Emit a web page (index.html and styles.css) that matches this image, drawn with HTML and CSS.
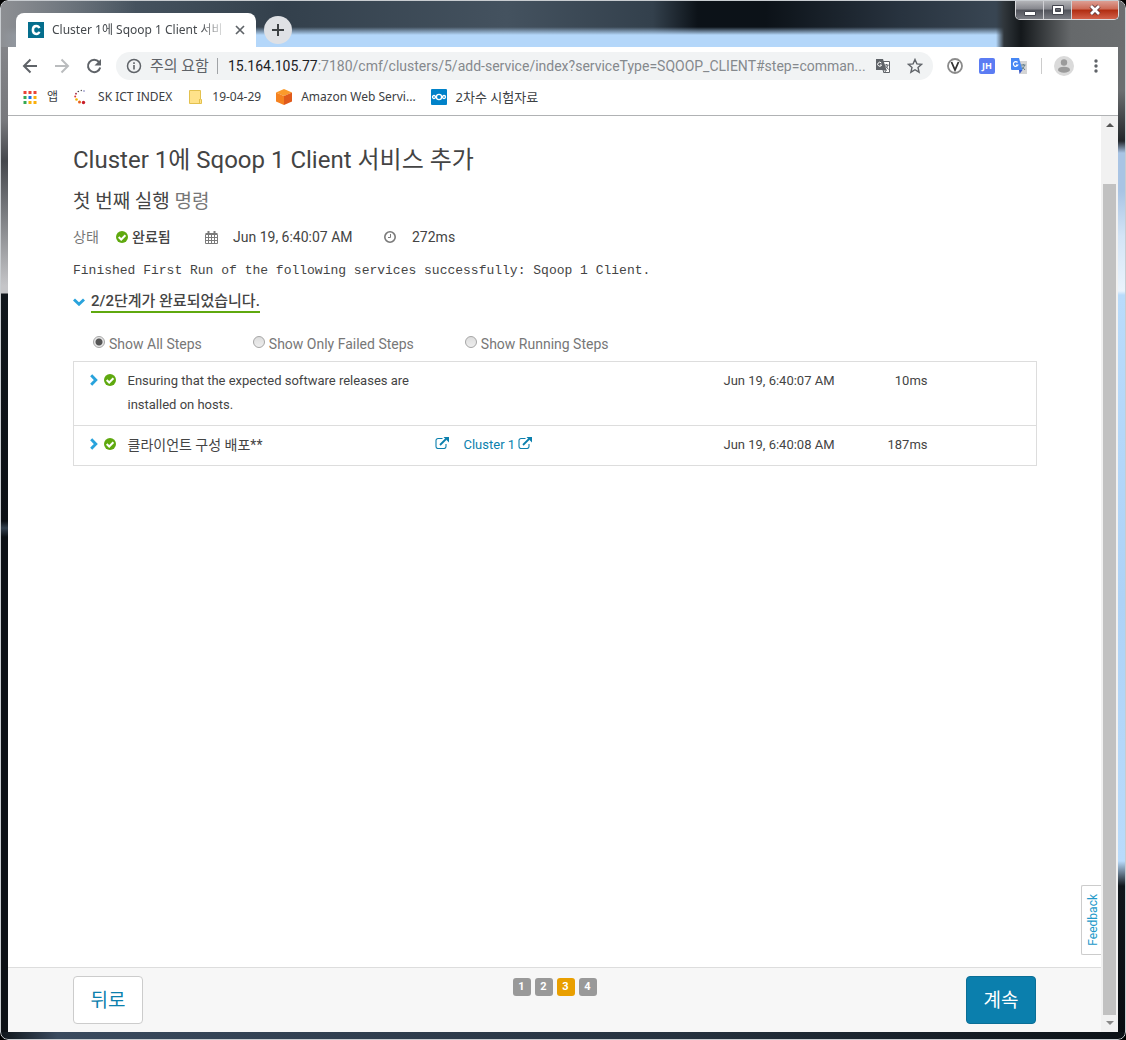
FILE: index.html
```html
<!DOCTYPE html>
<html lang="ko">
<head>
<meta charset="utf-8">
<title>Cluster 1에 Sqoop 1 Client 서비스 추가</title>
<link rel="stylesheet" href="styles.css">
</head>
<body>
<svg class="sprite" aria-hidden="true">
  <symbol id="check" viewBox="0 0 12 12"><circle cx="6" cy="6" r="6" fill="#5fa90f"/><path d="M2.7 6l2.5 2.5 4.2-4.3" fill="none" stroke="#fff" stroke-width="2"/></symbol>
  <symbol id="chevron" viewBox="0 0 8 12"><path d="M1.2 1.2L5.8 6l-4.6 4.8" fill="none" stroke="#29a3dc" stroke-width="2.9"/></symbol>
  <symbol id="external" viewBox="0 0 14 12"><path d="M7.500 1.500H3a2 2 0 0 0-2 2v6a2 2 0 0 0 2 2h6a2 2 0 0 0 2-2V7" fill="none" stroke="#0b7fad" stroke-width="1.100"/><path d="M5 8l6-6" stroke="#0b7fad" stroke-width="1.800"/><path d="M8.500 0H14v5.500z" fill="#0b7fad"/></symbol>
</svg>
<div class="window">
  <header class="titlebar">
    <div class="tab">
      <svg class="i16" viewBox="0 0 16 16"><path fill="#056e8d" d="M0 0h16v16H0z"/><path d="M11.300 6.200C10.800 4.700 9.700 4.100 8.300 4.100 6.200 4.100 4.900 5.700 4.900 8s1.300 3.900 3.400 3.900c1.500 0 2.600-.7 3-2.200" fill="none" stroke="#fff" stroke-width="2.500"/></svg>
      <span class="tab-title">Cluster 1에 Sqoop 1 Client 서비</span>
      <button class="bare" aria-label="탭 닫기"><svg width="10" height="10" viewBox="0 0 10 10"><path d="M1 1l8 8M9 1l-8 8" stroke="#5f6368" stroke-width="1.700"/></svg></button>
    </div>
    <button class="new-tab" aria-label="새 탭"><svg width="12" height="12" viewBox="0 0 12 12"><path d="M6 0v12M0 6h12" stroke="#3c4043" stroke-width="2"/></svg></button>
    <div class="controls">
      <button class="ctl" aria-label="최소화"><svg width="14" height="12" viewBox="0 0 14 12"><path d="M1.500 7.500h11v4h-11z" fill="#fff" stroke="#44464f"/></svg></button>
      <button class="ctl" aria-label="최대화"><svg width="14" height="12" viewBox="0 0 14 12"><path fill-rule="evenodd" d="M1.500 1.500h11v9h-11zM4.500 4.500h5v3h-5z" fill="#fff" stroke="#44464f"/></svg></button>
      <button class="ctl close" aria-label="닫기"><svg width="14" height="12" viewBox="0 0 14 12"><path d="M3 2l8 8M11 2l-8 8" stroke="#5c3a3c" stroke-width="4.500"/><path d="M3 2l8 8M11 2l-8 8" stroke="#fff" stroke-width="2.700"/></svg></button>
    </div>
  </header>
  <div class="toolbar">
    <button class="bare nav" aria-label="뒤로"><svg class="i16" viewBox="0 0 16 16"><path d="M15 8H2M8.500 1.500L2 8l6.500 6.500" fill="none" stroke="#5f6368" stroke-width="2"/></svg></button>
    <button class="bare nav" aria-label="앞으로"><svg class="i16" viewBox="0 0 16 16"><path d="M1 8h13M7.500 1.500L14 8l-6.500 6.500" fill="none" stroke="#babcbe" stroke-width="2"/></svg></button>
    <button class="bare nav" aria-label="새로고침"><svg class="i16" viewBox="0 0 16 16"><path d="M13 4A6.200 6.200 0 1 0 14.200 9.500" fill="none" stroke="#5f6368" stroke-width="2"/><path d="M15 1v6.500H8.500z" fill="#5f6368"/></svg></button>
    <div class="omnibox">
      <svg class="i16" viewBox="0 0 16 16"><circle cx="8" cy="8" r="6.500" fill="none" stroke="#5f6368" stroke-width="1.500"/><path d="M7.200 7h1.600v4.500H7.200zM7.200 4.300h1.600v1.600H7.200z" fill="#5f6368"/></svg>
      <span class="warn">주의 요함</span>
      <span class="url"><b>15.164.105.77</b>:7180/cmf/clusters/5/add-service/index?serviceType=SQOOP_CLIENT#step=comman...</span>
      <button class="bare" aria-label="번역"><svg class="i16" viewBox="0 0 16 16"><path d="M7 3.500h7.500v11H9" fill="#fff" stroke="#5f6368"/><path d="M1 1h7l3.500 11H1z" fill="#5f6368"/><path d="M6.300 5A2 2 0 1 0 6.600 7H5" fill="none" stroke="#fff"/><path d="M9.500 7h4M11.500 6v1M13 7c-.5 2-1.500 3-3 4M10.500 8l3 3.500M9 15l-1-3h3.500z" fill="none" stroke="#5f6368"/></svg></button>
      <button class="bare" aria-label="북마크"><svg class="i16" viewBox="0 0 16 16"><path d="M8 1.500l1.900 4.400 4.700.4-3.600 3.200 1.100 4.700L8 11.700l-4.100 2.500L5 9.500 1.400 6.300l4.700-.4z" fill="none" stroke="#5f6368" stroke-width="1.400"/></svg></button>
    </div>
    <div class="extensions">
      <svg class="i16" viewBox="0 0 16 16"><circle cx="8" cy="8" r="7" fill="#fff" stroke="#8b8b8b" stroke-width="1.800"/><path d="M4.500 4L8 12l3.500-8" fill="none" stroke="#333" stroke-width="1.800"/></svg>
      <span class="jh">JH</span>
      <svg class="i16" viewBox="0 0 16 16"><path d="M6 3h10v13H9z" fill="#d5d5d5"/><path d="M0 0h8l3.500 12H1a1 1 0 0 1-1-1z" fill="#4687f4"/><path d="M8 12h3.500L8.500 16z" fill="#3355c8"/><path d="M6.500 4.500A2.300 2.300 0 1 0 6.800 7H5" fill="none" stroke="#fff" stroke-width="1.200"/><path d="M10 7h4.500M12.300 6v1M13.500 7c-.5 2-1 3-2.500 4M11 8.500l3 3.500" fill="none" stroke="#607d8b"/></svg>
    </div>
    <svg class="avatar" viewBox="0 0 20 20"><circle cx="10" cy="10" r="10" fill="#dadada"/><circle cx="10" cy="6.500" r="3.200" fill="#9b9b9b"/><ellipse cx="10" cy="13.700" rx="6" ry="3" fill="#9b9b9b"/></svg>
    <button class="bare" aria-label="메뉴"><svg class="i16" viewBox="0 0 16 16" fill="#5f6368"><circle cx="8" cy="3" r="1.700"/><circle cx="8" cy="8" r="1.700"/><circle cx="8" cy="13" r="1.700"/></svg></button>
  </div>
  <nav class="bookmarks">
    <a href="#"><svg class="i16" viewBox="0 0 16 16"><path d="M1.500 2h3v3h-3zM6.500 2h3v3h-3zM11.500 2h3v3h-3z" fill="#ea4335"/><path d="M1.500 7h3v3h-3z" fill="#34a853"/><path d="M6.500 7h3v3h-3z" fill="#1a73e8"/><path d="M11.500 7h3v3h-3zM11.500 12h3v3h-3zM6.500 12h3v3h-3z" fill="#fbb00b"/><path d="M1.500 12h3v3h-3z" fill="#34a853"/></svg>앱</a>
    <a href="#"><svg class="i16" viewBox="0 0 16 16"><circle cx="10.500" cy="13.500" r="1.700" fill="#c81e2a"/><circle cx="6.500" cy="13" r="1.500" fill="#e8631a"/><circle cx="3.500" cy="10.500" r="1.300" fill="#f0b400"/><circle cx="2.200" cy="7.500" r="1" fill="#e0392b"/><circle cx="3" cy="4.700" r=".9" fill="#a02040"/><circle cx="5.300" cy="2.500" r=".8" fill="#444"/><circle cx="8.300" cy="1.500" r=".7" fill="#555"/><circle cx="11" cy="2" r=".7" fill="#55a"/></svg>SK ICT INDEX</a>
    <a href="#"><svg class="i16" viewBox="0 0 16 16"><path d="M2.500 1.500h11v9h1v4h-12z" fill="#ffe28a" stroke="#e3c14e"/><path d="M12.500 10v4" stroke="#e3c14e"/></svg>19-04-29</a>
    <a href="#"><svg class="i16" viewBox="0 0 16 16"><path d="M8 0l8 3.500L8 7 0 3.500z" fill="#fb9a2b"/><path d="M0 3.500L8 7v9l-8-3.500z" fill="#f58220"/><path d="M16 3.500L8 7v9l8-3.500z" fill="#e05a1b"/></svg>Amazon Web Servi...</a>
    <a href="#" class="ko"><svg class="i16" viewBox="0 0 16 16"><rect width="16" height="16" rx="1" fill="#0082c9"/><g fill="none" stroke="#fff" stroke-width="1.300"><circle cx="8" cy="8" r="2.600"/><circle cx="3" cy="8" r="1.500"/><circle cx="13" cy="8" r="1.500"/></g></svg>2차수 시험자료</a>
  </nav>
  <div class="viewport">
    <div class="page">
      <main>
        <h1>Cluster 1에 Sqoop 1 Client 서비스 추가</h1>
        <h2>첫 번째 실행 <small>명령</small></h2>
        <div class="status">
          <span class="muted">상태</span>
          <strong><svg class="i12"><use href="#check"/></svg>완료됨</strong>
          <svg class="cal" viewBox="0 0 13 13"><path d="M.5 3.500h12v9H.5zM.5 6.500h12M.5 9.500h12M3.500 4v8.500M6.500 4v8.500M9.500 4v8.500M.5 2.500h12" fill="none" stroke="#7a7a7a"/><path d="M3.500 0v3M9.500 0v3" stroke="#7a7a7a" stroke-width="2"/></svg>
          <span class="when">Jun 19, 6:40:07 AM</span>
          <svg class="i12" viewBox="0 0 12 12"><circle cx="6" cy="6" r="5.200" fill="none" stroke="#7a7a7a" stroke-width="1.600"/><path d="M6.500 3v3.500H4" fill="none" stroke="#7a7a7a"/></svg>
          <span class="took">272ms</span>
        </div>
        <p class="message">Finished First Run of the following services successfully: Sqoop 1 Client.</p>
        <button class="bare summary"><svg class="down" viewBox="0 0 12 8"><path d="M1 1.500l5 4.700 5-4.700" fill="none" stroke="#29a3dc" stroke-width="2.900"/></svg><span>2/2단계가 완료되었습니다.</span></button>
        <div class="filters">
          <label><input type="radio" name="f" checked>Show All Steps</label>
          <label><input type="radio" name="f">Show Only Failed Steps</label>
          <label><input type="radio" name="f">Show Running Steps</label>
        </div>
        <table class="steps">
          <tr>
            <td class="c-icon"><svg class="chev"><use href="#chevron"/></svg><svg class="i12"><use href="#check"/></svg></td>
            <td class="c-name">Ensuring that the expected software releases are installed on hosts.</td>
            <td class="c-ext"></td><td class="c-ctx"></td>
            <td class="c-time">Jun 19, 6:40:07 AM</td><td class="c-dur">10ms</td><td class="c-end"></td>
          </tr>
          <tr>
            <td class="c-icon"><svg class="chev"><use href="#chevron"/></svg><svg class="i12"><use href="#check"/></svg></td>
            <td class="c-name ko">클라이언트 구성 배포**</td>
            <td class="c-ext"><a href="#" aria-label="열기"><svg class="ext"><use href="#external"/></svg></a></td>
            <td class="c-ctx"><a href="#">Cluster 1 <svg class="ext"><use href="#external"/></svg></a></td>
            <td class="c-time">Jun 19, 6:40:08 AM</td><td class="c-dur">187ms</td><td class="c-end"></td>
          </tr>
        </table>
      </main>
      <button class="feedback">Feedback</button>
      <footer>
        <button class="btn">뒤로</button>
        <ol class="pager"><li>1</li><li>2</li><li class="on">3</li><li>4</li></ol>
        <button class="btn primary">계속</button>
      </footer>
    </div>
    <div class="scrollbar"><i class="up"></i><span class="thumb"></span><i class="dn"></i></div>
  </div>
</div>
</body>
</html>
```
FILE: styles.css
```css
* { box-sizing: border-box; }
html { height: 100%; background: #000; }
body { margin: 0; height: 100%; font: 13px/24px Roboto, "Noto Sans CJK KR", sans-serif; color: #444; }
button { font: inherit; cursor: pointer; }
svg { display: block; flex: none; }
a { color: #0b7fad; text-decoration: none; }
.sprite { position: absolute; width: 0; height: 0; }
.bare { padding: 0; border: 0; background: none; color: inherit; }
.i16 { width: 16px; height: 16px; }
.i12 { width: 12px; height: 12px; }

/* window frame */
.window {
  display: flex; flex-direction: column; min-height: 100%; padding: 0 7px 7px;
  border: 1px solid #c8ccd0; border-radius: 8px; outline: 1px solid #000;
  background:
    linear-gradient(90deg, #10161b, #3a4a5e 5%, #26323f 60%, #0c1116) bottom / 100% 7px no-repeat,
    linear-gradient(#8b8c90, #77787c 120px, #45474c 160px, #77797d 210px, #c5c5c8 285px, #c5c5c8 292px, #11171c 293px, #0c1015 520px, #33404e 527px, #0c1015 536px, #0c1015 100%) left / 7px 100% no-repeat,
    linear-gradient(#6b6e70, #6b6e70 90px, #22262a 140px, #a9c4e4 152px, #a9c4e4 190px, #d3e4f6 235px, #eaf3fc 290px, #b9dbfb 294px, #aed2f6 600px, #b9dbfb 860px, #10161b 885px, #080c10 100%) right / 7px 100% no-repeat,
    #15191d;
}
.titlebar {
  display: flex; height: 46px; margin: 0 -7px; padding: 12px 0 0 15px; border-radius: 7px 7px 0 0;
  background:
    linear-gradient(90deg, #8d8f93, #8d8f9300 12%) no-repeat,
    linear-gradient(90deg, transparent 995px, #30363b 1003px, #14181b 1020px, #66696b 1070px, #6b6e70),
    linear-gradient(transparent 26px, #b4d7fa 34px),
    linear-gradient(90deg, #56636f, #33404c 25%, #44525f 45%, #33404c 58%, #0c1218 62%, #0c1218 68%, #28333f 80%, #384552 88%);
}
.tab {
  display: flex; align-items: center; width: 240px; padding: 0 11px 0 12px; border-radius: 8px 8px 0 0; background: #fff;
  font: 12px/16px "Noto Sans", "Noto Sans CJK KR", sans-serif; color: #45494d;
}
.tab-title {
  flex: 1; margin: 0 8px; white-space: nowrap;
  mask-image: linear-gradient(90deg, #000 85%, transparent);
}
.new-tab {
  display: grid; place-items: center; width: 28px; height: 28px; margin: 3px 0 0 8px; padding: 0;
  border: 0; border-radius: 50%; background: #dfe1e5;
}
.controls { display: flex; height: 19px; margin: -12px 6px 0 auto; border: 1px solid #d9dadd; border-top: 0; border-radius: 0 0 5px 5px; overflow: hidden; }
.ctl { display: grid; place-items: center; width: 28px; padding: 0; border: 0; border-right: 1px solid #d0d0d4; background: linear-gradient(#b3b4b8, #85868c 45%, #50525a 50%, #7b7d84); }
.ctl.close { width: 46px; border: 0; background: linear-gradient(#dd9e93, #cc6955 45%, #b02c10 50%, #d2614a); }

/* address row */
.toolbar { display: flex; align-items: center; height: 38px; padding: 0 14px; background: #fff; }
.nav { margin-right: 16px; }
.omnibox {
  display: flex; align-items: center; flex: 1; min-width: 0; height: 28px; margin-left: -2px; padding: 0 10px; border-radius: 14px; background: #f1f3f4;
  font: 14px/20px Roboto, "Noto Sans CJK KR", sans-serif; color: #85898d;
}
.warn { margin: 0 10px 0 8px; padding-right: 8px; border-right: 1px solid #a0a3a6; font-size: 15px; line-height: 16px; color: #5f6368; white-space: nowrap; }
.url { flex: 1; min-width: 0; white-space: nowrap; }
.url b { font-weight: 400; color: #202124; }
.omnibox .bare + .bare { margin-left: 16px; }
.extensions { display: flex; gap: 16px; margin: 0 12px 0 14px; padding-right: 14px; border-right: 1px solid #ccc; }
.jh { width: 16px; height: 16px; border-radius: 2px; background: #5b7cf3; color: #fff; font: bold 9px/16px "Open Sans", sans-serif; text-align: center; }
.avatar { width: 20px; height: 20px; margin-right: 14px; }

.bookmarks { display: flex; align-items: center; gap: 15px; height: 31px; padding: 0 14px 6px; border-bottom: 1px solid #b0b2b4; background: #fff; font: 12px/16px "Noto Sans", "Noto Sans CJK KR", sans-serif; }
.bookmarks a { display: flex; gap: 9px; color: #3c4043; white-space: nowrap; }
.bookmarks .ko { font-size: 13px; }

/* wizard page */
.viewport { display: flex; flex: 1; background: #fff; }
.page { position: relative; display: flex; flex-direction: column; flex: 1; }
main { flex: 1; padding: 26px 64px 24px 65px; }
h1 { margin: 0; font-size: 24px; line-height: 36px; font-weight: 400; }
h2 { margin: 10px 0 0; font-size: 19px; line-height: 28px; font-weight: 400; }
h2 small { font-size: 19px; color: #777; }
.status { display: flex; align-items: center; margin-top: 9px; font-size: 14px; }
.muted { width: 43px; color: #777; }
.status strong { display: flex; align-items: center; gap: 4px; width: 89px; font-weight: 500; }
.cal { width: 13px; height: 13px; margin-right: 15px; }
.when { width: 151px; }
.took { margin-left: 16px; }
.message { margin: 10px 0 8px; font: 13px/24px "Liberation Mono", monospace; }
.summary { display: flex; align-items: center; gap: 6px; font-size: 15px; font-weight: 500; line-height: 20px; }
.summary span { border-bottom: 2px solid #5fa90f; }
.down { width: 12px; height: 8px; }
.filters { display: flex; margin-top: 19px; padding-left: 20px; font-size: 14px; color: #777; }
.filters label { display: flex; align-items: center; margin-right: 51px; }
.filters input {
  appearance: none; width: 12px; height: 12px; margin: 0 4px 4px 0; border: 1px solid #a5a5a5; border-radius: 50%;
  background: linear-gradient(#ddd, #eee);
}
.filters input:checked { background: radial-gradient(#555 3px, #e6e6e6 4px); }
.steps { width: 100%; margin-top: 5px; border: 1px solid #ddd; border-collapse: collapse; table-layout: fixed; }
.steps tr { border-top: 1px solid #ddd; }
.steps td { padding: 7px 0 8px; vertical-align: top; }
.steps .c-icon { width: 54px; padding: 12px 0 0 16px; }
.c-icon svg { display: inline-block; vertical-align: top; }
.chev { width: 8px; height: 12px; margin-right: 6px; }
.c-name { width: 307px; }
.c-name.ko { font-size: 14px; }
.steps tr:first-child .c-name { padding-right: 10px; }
.c-ext { width: 29px; }
.ext { display: inline-block; width: 14px; height: 12px; }
.c-time { width: 126px; }
.c-dur { width: 78px; text-align: right; }
.c-end { width: 109px; }
.feedback {
  position: absolute; right: 0; bottom: 77px; width: 20px; height: 70px; padding: 0 0 0 2px; border: 1px solid #ccc; border-right: 0; border-radius: 2px 0 0 2px;
  background: #fff; color: #2299c9; font-size: 12px; line-height: 18px; writing-mode: sideways-lr;
}
footer { display: flex; justify-content: space-between; height: 65px; padding: 8px 65px; border-top: 1px solid #ddd; background: #f7f7f7; }
.btn { width: 70px; height: 48px; padding: 2px 0 0; border: 1px solid #ccc; border-radius: 4px; background: #fff; color: #0b7fad; font-size: 19px; }
.primary { border-color: #0a6e96; background: #0b7fad; color: #fff; }
.pager { display: flex; gap: 4px; margin: 2px 0; padding: 0; list-style: none; font-size: 11px; line-height: 18px; font-weight: 700; color: #fff; text-align: center; }
.pager li { width: 18px; height: 18px; border-radius: 3px; background: #999; }
.pager .on { background: #e99f00; }
.scrollbar { display: flex; flex-direction: column; align-items: center; width: 17px; padding: 7px 2px; background: #f1f1f1; }
.up, .dn { border: 4px solid transparent; }
.up { border-bottom-color: #555; border-top: 0; margin-bottom: 57px; }
.dn { border-top-color: #888; border-bottom: 0; margin-top: 6px; }
.thumb { flex: 1; width: 13px; background: #c1c1c1; }
```
